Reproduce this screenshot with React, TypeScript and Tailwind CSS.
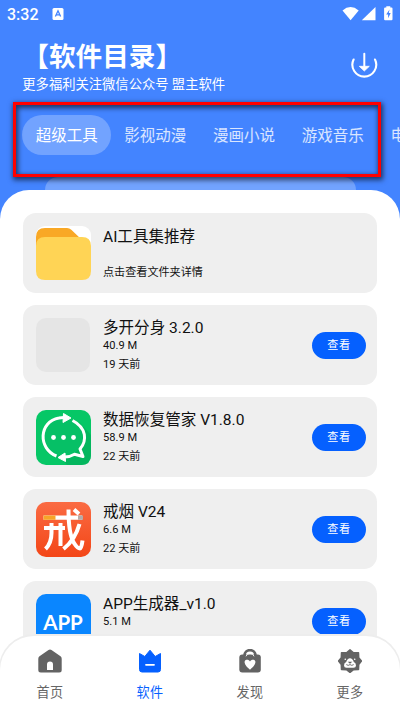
import React from "react";

const font = "font-[Roboto,'Noto_Sans_CJK_SC',sans-serif]";

function StatusBar() {
  return (
    <div className="flex h-[28px] items-center pl-[7px] pr-[7px] text-white">
      <span className="pt-px text-[16px] font-medium leading-none">3:32</span>
      <svg className="ml-[13px]" width="12" height="12" viewBox="0 0 12 12">
        <rect x="0.5" width="11" height="12" rx="1.5" fill="white" />
        <path d="M3.4 8.6 6 2.8 8.6 8.6M4.4 6.8h3.2" fill="none" stroke="#4384ff" strokeWidth="1.3" />
      </svg>
      <svg className="ml-auto" width="52" height="16" viewBox="0 0 52 16">
        <path d="M1.500 4.400Q9.500 -2.200 17.700 4.400L9.600 14.300Z" fill="white" />
        <path d="M34.500 1V14.300H20.800Z" fill="white" />
        <path d="M45.3 .2h4v1.3h1.2q1 0 1 1V13.3q0 1-1 1h-6.400q-1 0-1-1V2.500q0-1 1-1h1.200Z" fill="white" />
        <path d="M48.500 3.500 45.200 8.500h1.900v3.700L49.700 7h-1.900Z" fill="#4384ff" />
      </svg>
    </div>
  );
}

function DownloadIcon() {
  return (
    <svg className="mr-[22px] mt-[24px]" width="28" height="26" viewBox="0 0 28 26" fill="none" stroke="white">
      <path d="M3.600 7.500A11.900 11.900 0 1 0 25 7.500" strokeWidth="2.100" strokeLinecap="round" />
      <path d="M14.300 1.700V14" strokeWidth="2" strokeLinecap="round" />
      <path d="M9.300 14.300h10L14.300 19Z" fill="white" strokeWidth=".8" strokeLinejoin="round" />
    </svg>
  );
}

function FolderIcon() {
  return (
    <svg width="55" height="55" viewBox="0 0 55 55">
      <rect width="55" height="30" rx="9" fill="white" />
      <path d="M0 30V11Q0 2 9 2h22q2.500 0 4.300 1.800L45 13v17Z" fill="#f9a825" />
      <path d="M0 20q0-9 9-9h37q9 0 9 9v25q0 9-9 9H9q-9 0-9-9Z" fill="#ffd455" />
    </svg>
  );
}

function RecoverIcon() {
  return (
    <svg width="55" height="55" viewBox="0 0 55 55">
      <rect width="55" height="55" rx="10" fill="#06c766" />
      <path d="M8 38Q14 48 25 48L31 55H45Q55 55 55 45V25L43 12Z" fill="#04b65e" />
      <circle cx="27.500" cy="27.500" r="19" fill="#06c066" />
      <g fill="none" stroke="white" strokeWidth="3" strokeLinejoin="round">
        <path d="M20.500 46C2 39 2.500 11.500 23 8Q26 7.300 29 7.500" />
        <path d="M36.500 10.500C51 18 51 31 44 39L47 46.500 38.500 44.300Q33 47.500 27 47" />
      </g>
      <path d="M27.500 3.500 35 8l-8 4.500ZM29 43 22 47.500l7.500 4Z" fill="white" stroke="white" />
      <g fill="white"><circle cx="17.500" cy="27.500" r="2.400" /><circle cx="27.500" cy="27.500" r="2.400" /><circle cx="37.500" cy="27.500" r="2.400" /></g>
    </svg>
  );
}

function QuitIcon() {
  return (
    <svg width="55" height="55" viewBox="0 0 55 55">
      <defs>
        <linearGradient id="quit" x1="0" y1="0" x2="0" y2="1">
          <stop offset="0" stopColor="#fa6b43" />
          <stop offset="1" stopColor="#f34617" />
        </linearGradient>
      </defs>
      <rect width="55" height="55" rx="10" fill="url(#quit)" />
      <g fill="none" stroke="white" strokeWidth="4">
        <path d="M8 26H29M15.500 21V31Q15.500 41 9.500 47M24.500 21V44" />
        <path d="M32.500 7.500Q32.500 32 38 41 41.500 46.500 44 46.500 45.500 46.500 46.500 38.500M43.500 22Q39 38 27.500 47" />
        <path d="M38 7.500 43 12" />
      </g>
      <path d="M7.500 13.500h38.500v4.300H7.500Z" fill="white" />
      <path d="M7.500 13.500h12v4.300h-12Z" fill="#f7a528" />
      <path d="M42 13.500h5v4.300h-5Z" fill="#b6aaa7" />
    </svg>
  );
}

type Item = { title: string; size?: string; date?: string; note?: string; icon: React.ReactNode };

const items: Item[] = [
  { title: "AI工具集推荐", note: "点击查看文件夹详情", icon: <FolderIcon /> },
  { title: "多开分身 3.2.0", size: "40.9 M", date: "19 天前", icon: <div className="h-[54px] w-[54px] rounded-[10px] bg-[#e5e5e5]" /> },
  { title: "数据恢复管家 V1.8.0", size: "58.9 M", date: "22 天前", icon: <RecoverIcon /> },
  { title: "戒烟 V24", size: "6.6 M", date: "22 天前", icon: <QuitIcon /> },
  {
    title: "APP生成器_v1.0", size: "5.1 M", date: "22 天前",
    icon: <div className="flex h-[55px] w-[55px] items-center justify-center rounded-[10px] bg-[#0a86ff] pt-[2px] font-[Lato,sans-serif] text-[20.500px] font-bold text-white">APP</div>,
  },
];

function Card({ item }: { item: Item }) {
  return (
    <div className="flex h-[80px] shrink-0 rounded-[13px] bg-[#efefef] pl-[13px] pr-[11px] text-[#111]">
      <div className="-ml-[0.500px] mt-[13px] h-[55px] w-[55px] shrink-0">{item.icon}</div>
      <div className="ml-[12.500px] flex-1 whitespace-nowrap pt-[13px]">
        {item.note ? (
          <>
            <div className="pt-px text-[15.550px] leading-[20px]">{item.title}</div>
            <div className="mt-[17px] text-[11.100px] leading-[18px]">{item.note}</div>
          </>
        ) : (
          <>
            <div className="text-[15.550px] leading-[20px]">{item.title}</div>
            <div className="text-[11.100px] leading-[16px]">{item.size}</div>
            <div className="mt-[2px] text-[11.100px] leading-[18px]">{item.date}</div>
          </>
        )}
      </div>
      {!item.note && (
        <button className="mt-[26.500px] h-[27px] w-[54px] rounded-full bg-[#0560ff] pt-px text-[11.100px] leading-none tracking-[0.600px] text-white">查看</button>
      )}
    </div>
  );
}

const tabs = ["超级工具", "影视动漫", "漫画小说", "游戏音乐", "电"];

const navItems = [
  {
    label: "首页", active: false,
    icon: (
      <path fillRule="evenodd" fill="#636363" d="M10.500 1.100q1.500-1.100 3 0l9 6.200q1.200.9 1.200 2.400V21q0 2.500-2.500 2.500H2.800Q.3 23.500.3 21V9.700q0-1.500 1.200-2.400ZM9 21h6v-5.500a3 3 0 0 0-6 0Z" />
    ),
  },
  {
    label: "软件", active: true,
    icon: (
      <>
        <path fill="#0560ff" stroke="#0560ff" strokeLinejoin="round" d="M1.500 4.500 6.800 7.500 12 1.200 17.200 7.500 22.500 4.500V20.500q0 2.500-2.500 2.500H4q-2.500 0-2.500-2.500Z" />
        <path d="M8 15.800h8" stroke="white" strokeWidth="1.800" strokeLinecap="round" />
      </>
    ),
  },
  {
    label: "发现", active: false,
    icon: (
      <>
        <path d="M6.500 8V6.700a5.500 5.500 0 0 1 11 0V8" fill="none" stroke="#636363" strokeWidth="2.800" />
        <rect x="1.300" y="5.500" width="21.500" height="18" rx="3" fill="#636363" />
        <path d="M8 7.300a4.200 4.200 0 0 1 8 0" fill="none" stroke="white" strokeWidth=".9" />
        <path d="M12 20.700C8.500 18 6 14.500 6.700 12.300 7.700 10 11 10.500 12 12.500 13 10.500 16.300 10 17.300 12.300 18 14.500 15.500 18 12 20.700Z" fill="white" />
      </>
    ),
  },
  {
    label: "更多", active: false,
    icon: (
      <>
        <path fill="#636363" stroke="#636363" strokeWidth="1.500" strokeLinejoin="round" d="M12 .9 15.200 3.600 20.500 3.800 20.700 8.800 23.500 12 20.700 15.500 20.500 20.500 15.500 20.700 12 23.400 8.500 20.700 3.500 20.500 3.300 15.500 .5 12 3.300 8.800 3.500 3.800 8.800 3.600Z" />
        <path d="M6 16.500Q6 13.800 8.200 13 9.500 9.300 12 9.300t3.800 3.700q2.200.8 2.200 3.500 0 2.300-2.500 2.300h-7Q6 18.800 6 16.500Z" fill="white" />
        <path d="M9.700 12.800h4.600L12 14.800Z" fill="#636363" />
        <path d="M8.300 15.600q2 1.500 3.700 0 1.700 1.500 3.700 0" fill="none" stroke="#636363" strokeWidth=".9" />
        <circle cx="7.300" cy="10.300" r=".8" fill="white" /><circle cx="16.700" cy="10.300" r=".8" fill="white" />
      </>
    ),
  },
];

export default function App() {
  return (
    <div className={`relative h-[711px] w-[400px] overflow-hidden bg-[#4384ff] ${font}`}>
      <StatusBar />
      <header className="flex h-[87px] justify-between text-white">
        <div className="whitespace-nowrap pl-[22.300px] pt-[13px]">
          <h1 className="text-[26.650px] font-bold leading-[32px]">【软件目录】</h1>
          <p className="text-[13.300px] leading-[24px]">更多福利关注微信公众号 盟主软件</p>
        </div>
        <DownloadIcon />
      </header>
      <nav className="flex h-[40px] overflow-hidden pl-[22.300px]">
        {tabs.map((t, i) => (
          <div
            key={t}
            className={`h-[40px] shrink-0 rounded-full px-[13.350px] pt-px text-[15.500px] leading-[40px] ${i === 0 ? "bg-white/25 text-white" : "text-white/80"}`}
          >
            {t}
          </div>
        ))}
      </nav>
      <div className="mx-[44.500px] mt-[22px] h-[13px] rounded-t-[13px] bg-white/25" />
      <main className="flex h-[521px] flex-col gap-[12px] overflow-hidden rounded-t-[29px] bg-white px-[23px] pt-[23px]">
        {items.map((item) => <Card key={item.title} item={item} />)}
      </main>
      <div className="absolute left-[13px] top-[102px] h-[75px] w-[368px] border-[3px] border-[#f00] shadow-[1px_2px_5px_1px_rgba(0,0,0,0.6),inset_1px_2px_5px_1px_rgba(0,0,0,0.6)]" />
      <footer className="absolute bottom-0 left-0 flex h-[75px] w-[400px] rounded-t-[34px] bg-white shadow-[0_-1px_0_1px_#ededed]">
        {navItems.map((n) => (
          <div key={n.label} className="flex w-[100px] flex-col items-center pt-[13px]">
            <svg width="24" height="24" viewBox="0 0 24 24">{n.icon}</svg>
            <span className={`mt-[10px] text-[13.100px] leading-[20px] tracking-[0.300px] ${n.active ? "text-[#0560ff]" : "text-[#666]"}`}>{n.label}</span>
          </div>
        ))}
      </footer>
    </div>
  );
}
